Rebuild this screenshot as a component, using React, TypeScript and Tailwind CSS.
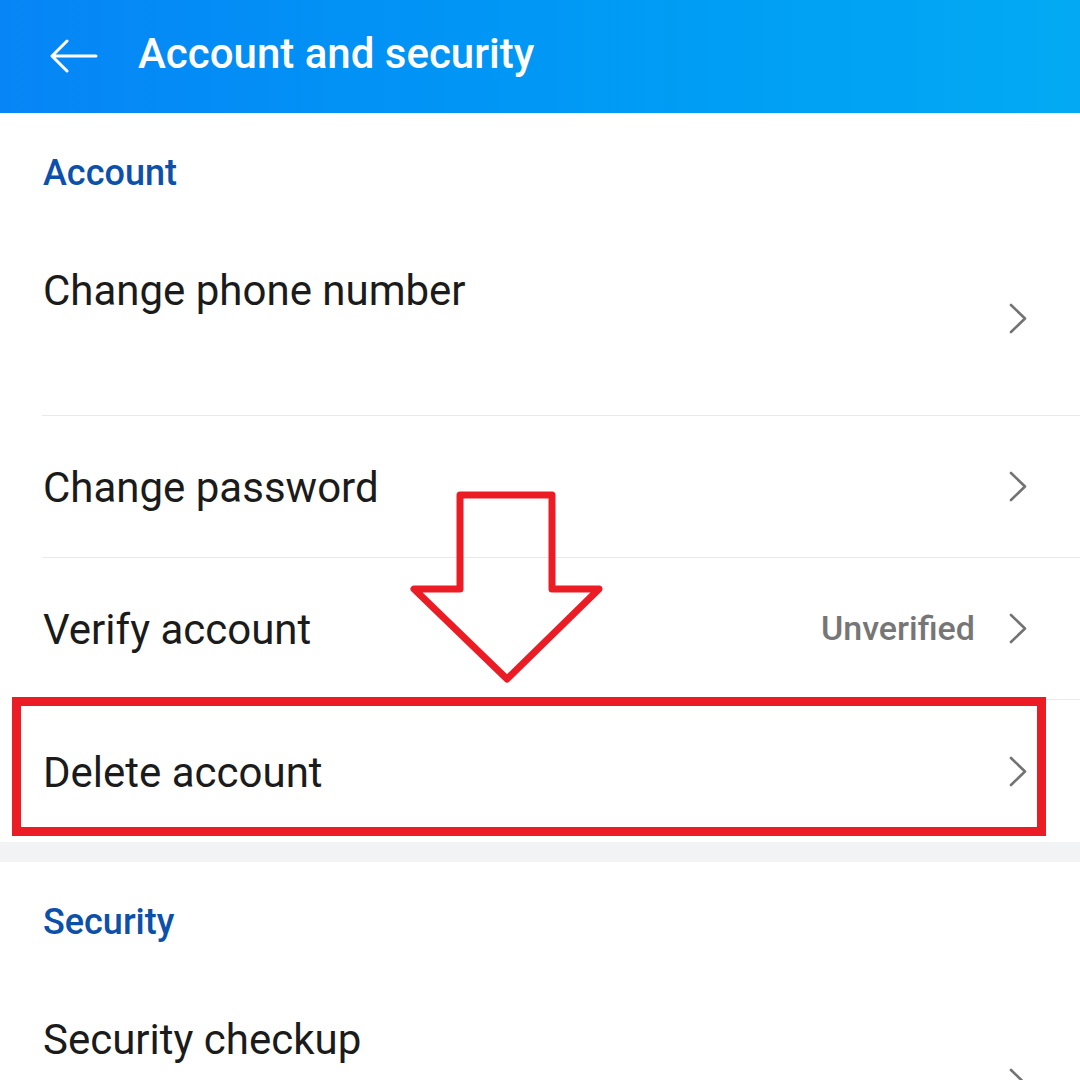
import type React from "react"

const Chevron: React.FC = () => (
  <svg width="18" height="31" viewBox="0 0 18 31" fill="none" className="shrink-0">
    <path d="M2 2 L16 15.5 L2 29" stroke="#737373" strokeWidth="2.6" strokeLinecap="round" strokeLinejoin="round" />
  </svg>
)

const SectionTitle: React.FC<{ title: string }> = ({ title }) => (
  <div className="h-[108px] pt-[38px] pl-[43px]">
    <div className="text-[36px] leading-[44px] font-medium text-[#0d50a9]">{title}</div>
  </div>
)

const Row: React.FC<{ label: string; value?: string; divider?: boolean; tall?: boolean; lowChevron?: boolean }> = ({
  label,
  value,
  divider = true,
  tall = false,
  lowChevron = false,
}) => (
  <div className="pl-[42px]">
    <div
      className={`flex justify-between pr-[53px] ${tall ? "h-[195px] items-start pt-[48px]" : "h-[142px] items-center pt-[3px]"} ${
        divider ? "border-b border-[#e9e9e9]" : ""
      }`}
    >
      <div className="text-[42px] leading-[44px] text-[#1b1b1b] pl-px">{label}</div>
      <div
        className={`flex items-center gap-[34px] ${
          tall ? (lowChevron ? "self-center -mt-[17px]" : "self-center -mt-[48px]") : "-mt-[3px]"
        }`}
      >
        {value && <span className="text-[34px] font-medium text-[#767676]">{value}</span>}
        <Chevron />
      </div>
    </div>
  </div>
)

export default function App() {
  return (
    <div className="relative w-[1080px] h-[1080px] overflow-hidden bg-white" style={{ fontFamily: "Roboto, 'Noto Sans', sans-serif" }}>
      <header className="h-[113px] flex items-center bg-gradient-to-r from-[#0785f6] to-[#03aaf3] pl-[50px]">
        <svg width="48" height="36" viewBox="0 0 48 36" fill="none">
          <path d="M46 17 L3 17 M17 2 L2 17 L17 32" stroke="white" strokeWidth="3" strokeLinecap="round" strokeLinejoin="round" />
        </svg>
        <h1 className="ml-[40px] text-[42px] font-medium text-white leading-none -mt-[6px]">Account and security</h1>
      </header>

      <SectionTitle title="Account" />
      <Row label="Change phone number" tall />
      <Row label="Change password" />
      <Row label="Verify account" value="Unverified" />
      <Row label="Delete account" divider={false} />

      <div className="h-[20px] bg-[#f2f3f5]" />

      <SectionTitle title="Security" />
      <Row label="Security checkup" tall lowChevron divider={false} />

      {/* annotation overlay */}
      <div className="absolute left-[12px] top-[697px] w-[1034px] h-[139px] border-[9px] border-[#ec1c24] pointer-events-none" />
      <svg className="absolute left-0 top-0 pointer-events-none" width="1080" height="1080" viewBox="0 0 1080 1080" fill="none">
        <polygon
          points="460,495 552,495 552,589 599,589 507,679 414,589 460,589"
          stroke="#ec1c24"
          strokeWidth="7"
          strokeLinejoin="round"
        />
      </svg>
    </div>
  )
}
